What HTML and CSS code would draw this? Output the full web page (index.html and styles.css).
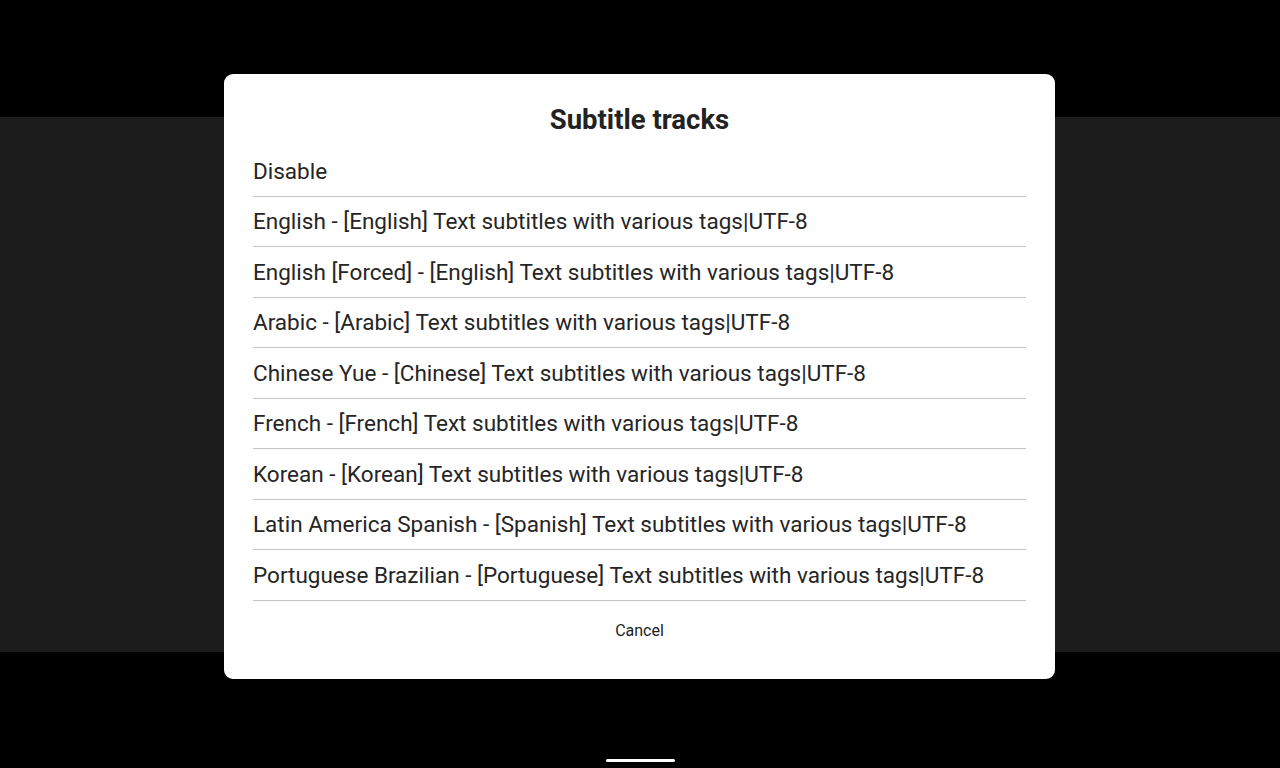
FILE: index.html
```html
<!DOCTYPE html>
<html lang="en">
<head>
<meta charset="utf-8">
<title>Subtitle tracks</title>
<link rel="stylesheet" href="styles.css">
</head>
<body>
<div class="screen">
  <div class="video"></div>
  <div class="home-indicator"></div>
  <div class="overlay">
    <div class="dialog">
      <h1 class="title">Subtitle tracks</h1>
      <ul class="list">
        <li class="item">Disable</li>
        <li class="item">English - [English] Text subtitles with various tags|UTF-8</li>
        <li class="item">English [Forced] - [English] Text subtitles with various tags|UTF-8</li>
        <li class="item">Arabic - [Arabic] Text subtitles with various tags|UTF-8</li>
        <li class="item">Chinese Yue - [Chinese] Text subtitles with various tags|UTF-8</li>
        <li class="item">French - [French] Text subtitles with various tags|UTF-8</li>
        <li class="item">Korean - [Korean] Text subtitles with various tags|UTF-8</li>
        <li class="item">Latin America Spanish - [Spanish] Text subtitles with various tags|UTF-8</li>
        <li class="item">Portuguese Brazilian - [Portuguese] Text subtitles with various tags|UTF-8</li>
      </ul>
      <div class="actions">
        <button class="cancel">Cancel</button>
      </div>
    </div>
  </div>
</div>
</body>
</html>
```

FILE: styles.css
```css
* { box-sizing: border-box; }
html, body {
  margin: 0;
  padding: 0;
  background: #000;
  font-family: Roboto, "Liberation Sans", sans-serif;
}
.screen {
  position: relative;
  width: 1280px;
  height: 768px;
  overflow: hidden;
  background: #000;
  padding-top: 117px;
}
.video {
  height: 535px;
  background: #1c1c1c;
}
.home-indicator {
  position: absolute;
  left: 606px;
  top: 759px;
  width: 69px;
  height: 3px;
  border-radius: 2px;
  background: #fff;
}
.overlay {
  position: absolute;
  inset: 0;
  display: flex;
  justify-content: flex-start;
  align-items: flex-start;
  padding: 74px 0 0 224px;
}
.dialog {
  width: 831px;
  background: #fff;
  border-radius: 9px;
  padding: 0 29px 24px;
}
.title {
  margin: 0;
  padding: 30px 0 10px;
  font-size: 27.5px;
  line-height: 32px;
  font-weight: 700;
  text-align: center;
  color: #222;
}
.list {
  list-style: none;
  margin: 0;
  padding: 0;
}
.item {
  height: 50.5px;
  display: flex;
  align-items: center;
  border-bottom: 1px solid #c4c4c4;
  font-size: 22.5px;
  color: #252525;
  white-space: nowrap;
}
.actions {
  display: flex;
  justify-content: center;
  padding-top: 6px;
}
.cancel {
  height: 48px;
  border: 0;
  background: transparent;
  font-family: Roboto, "Liberation Sans", sans-serif;
  font-size: 16px;
  color: #222;
  padding: 0 16px;
}
```
